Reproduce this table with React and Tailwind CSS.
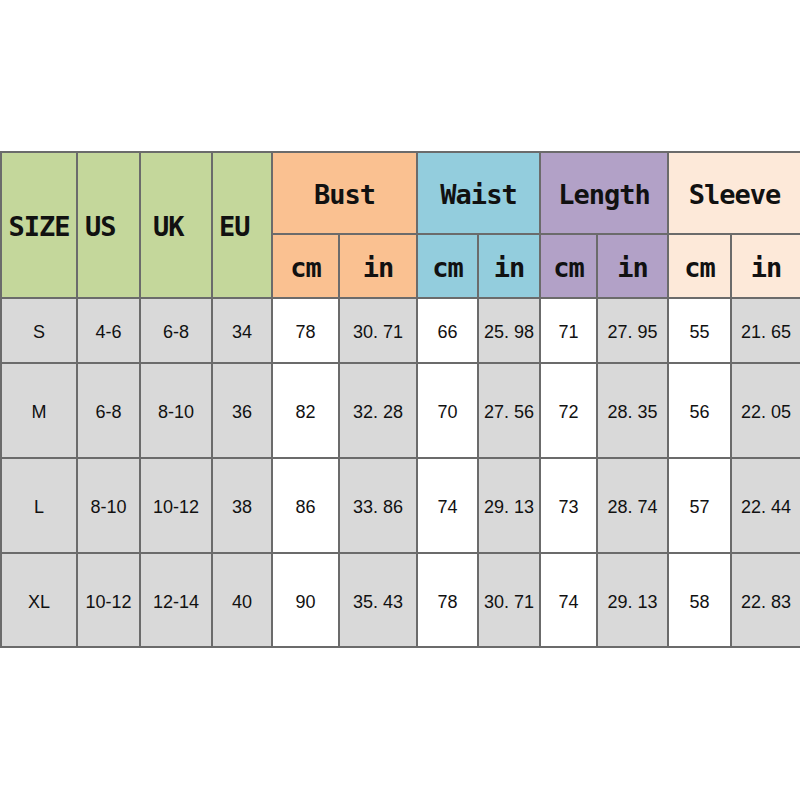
import React from 'react';

const groups = [
  { name: 'Bust', bg: 'bg-[#fac191]' },
  { name: 'Waist', bg: 'bg-[#93cddd]' },
  { name: 'Length', bg: 'bg-[#b2a1c7]' },
  { name: 'Sleeve', bg: 'bg-[#fde9d9]' },
];

const rows = [
  { size: 'S', us: '4-6', uk: '6-8', eu: '34', vals: ['78', '30. 71', '66', '25. 98', '71', '27. 95', '55', '21. 65'] },
  { size: 'M', us: '6-8', uk: '8-10', eu: '36', vals: ['82', '32. 28', '70', '27. 56', '72', '28. 35', '56', '22. 05'] },
  { size: 'L', us: '8-10', uk: '10-12', eu: '38', vals: ['86', '33. 86', '74', '29. 13', '73', '28. 74', '57', '22. 44'] },
  { size: 'XL', us: '10-12', uk: '12-14', eu: '40', vals: ['90', '35. 43', '78', '30. 71', '74', '29. 13', '58', '22. 83'] },
];

const mono = "font-['DejaVu_Sans_Mono',monospace] font-bold text-[27px] tracking-[-1px] text-[#111] pt-[5px]";
const body = "font-['Liberation_Sans',Arial,sans-serif] text-[18px] text-[#111] pt-[4px]";

export default function App() {
  return (
    <div className="w-[800px] h-[800px] bg-white pt-[151px] overflow-hidden">
      <div className="grid w-fit grid-cols-[74px_61px_70px_58px_65px_76px_59px_60px_55px_69px_61px_68px] grid-rows-[80px_62px_63px_93px_93px_92px] gap-[2px] bg-[#6b6b6b] pl-[2px] pt-[2px] pb-[2px]">
        <div className={`row-span-2 bg-[#c4d79b] flex items-center justify-center ${mono}`}>SIZE</div>
        <div className={`row-span-2 bg-[#c4d79b] flex items-center pl-[7px] ${mono}`}>US</div>
        <div className={`row-span-2 bg-[#c4d79b] flex items-center pl-[12px] ${mono}`}>UK</div>
        <div className={`row-span-2 bg-[#c4d79b] flex items-center pl-[6px] ${mono}`}>EU</div>
        {groups.map((g) => (
          <div key={g.name} className={`col-span-2 flex items-center justify-center ${g.bg} ${mono}`}>
            {g.name}
          </div>
        ))}
        {groups.map((g) => (
          <React.Fragment key={g.name + '-units'}>
            <div className={`flex items-center justify-center ${g.bg} ${mono}`}>cm</div>
            <div className={`flex items-center justify-center ${g.bg} ${mono}`}>in</div>
          </React.Fragment>
        ))}
        {rows.map((r) => (
          <React.Fragment key={r.size}>
            <div className={`bg-[#d9d9d9] flex items-center justify-center ${body}`}>{r.size}</div>
            <div className={`bg-[#d9d9d9] flex items-center justify-center ${body}`}>{r.us}</div>
            <div className={`bg-[#d9d9d9] flex items-center justify-center ${body}`}>{r.uk}</div>
            <div className={`bg-[#d9d9d9] flex items-center justify-center ${body}`}>{r.eu}</div>
            {r.vals.map((v, i) => (
              <div
                key={i}
                className={`flex items-center justify-center whitespace-pre ${i % 2 === 0 ? 'bg-white' : 'bg-[#d9d9d9]'} ${body}`}
              >
                {v}
              </div>
            ))}
          </React.Fragment>
        ))}
      </div>
    </div>
  );
}
